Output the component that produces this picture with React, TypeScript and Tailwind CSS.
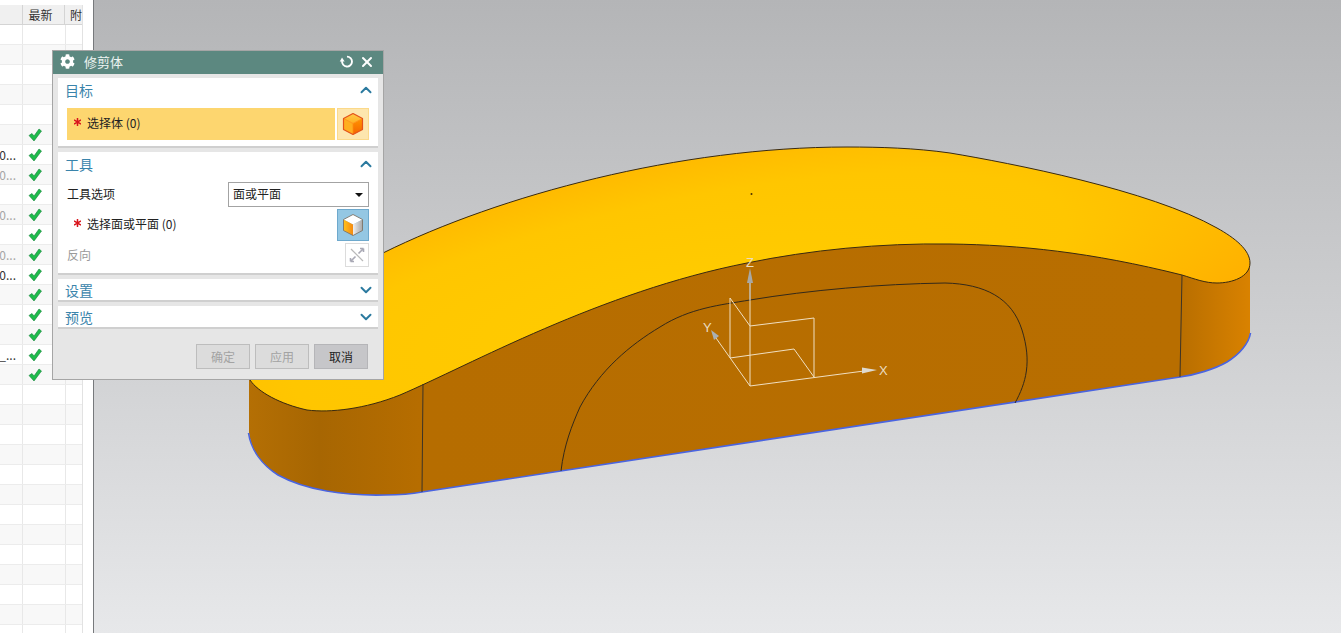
import { ChevronDown, ChevronUp, X } from "lucide-react"
import { FaCog } from "react-icons/fa"

const rows: { text?: string; muted?: boolean; checked?: boolean }[] = Array.from({ length: 31 }, (_, i) => ({
  checked: i >= 5 && i <= 17,
}))
rows[6].text = "0..."
rows[7].text = "0..."
rows[7].muted = true
rows[9].text = "0..."
rows[9].muted = true
rows[11].text = "0..."
rows[11].muted = true
rows[12].text = "0..."
rows[16].text = "_..."

function Check() {
  return (
    <svg width="14" height="14" viewBox="0 0 14 14">
      <path d="M1 7.500 L4 5.500 L6 8 L11 1 L13.500 3 L6 13 Z" fill="#1fbb4c" stroke="#14853a" strokeWidth="0.6" />
    </svg>
  )
}

function ResetIcon() {
  return (
    <svg width="15" height="15" viewBox="0 0 16 16" fill="none">
      <path d="M8.500 2.800 A5.300 5.300 0 1 1 3.300 7.500" stroke="#fff" strokeWidth="2" />
      <path d="M0.800 8 L6 8 L3.200 3.600 Z" fill="#fff" />
    </svg>
  )
}

function OrangeCube() {
  return (
    <svg width="22" height="24" viewBox="0 0 22 24">
      <defs>
        <linearGradient id="cubeTop" x1="0" y1="0" x2="0" y2="1">
          <stop offset="0" stopColor="#ffc94a" />
          <stop offset="1" stopColor="#ffb020" />
        </linearGradient>
        <linearGradient id="cubeRight" x1="0" y1="0" x2="0" y2="1">
          <stop offset="0" stopColor="#ff9500" />
          <stop offset="1" stopColor="#f56400" />
        </linearGradient>
      </defs>
      <path d="M11 1.500 L20.500 6.500 L11 11.500 L1.500 6.500 Z" fill="url(#cubeTop)" />
      <path d="M1.500 6.500 L11 11.500 L11 22.500 L1.500 17.500 Z" fill="#ffae1f" />
      <path d="M20.500 6.500 L11 11.500 L11 22.500 L20.500 17.500 Z" fill="url(#cubeRight)" />
      <path d="M1.500 6.500 L11 11.500 L20.500 6.500 M11 11.500 V22.500" fill="none" stroke="#ff8a10" strokeWidth="0.8" />
      <path d="M11 1.500 L20.500 6.500 V17.500 L11 22.500 L1.500 17.500 V6.500 Z" fill="none" stroke="#e4521a" strokeWidth="1.200" strokeLinejoin="round" />
    </svg>
  )
}

function ToolCube() {
  return (
    <svg width="22" height="24" viewBox="0 0 22 24">
      <defs>
        <linearGradient id="toolLeft" x1="0" y1="0" x2="1" y2="0">
          <stop offset="0" stopColor="#ffc21c" />
          <stop offset="1" stopColor="#f58a10" />
        </linearGradient>
        <linearGradient id="toolRight" x1="0" y1="0" x2="1" y2="0">
          <stop offset="0" stopColor="#eeeeee" />
          <stop offset="1" stopColor="#a8a8a8" />
        </linearGradient>
      </defs>
      <path d="M11 1.500 L20.500 6.500 L11 11.500 L1.500 6.500 Z" fill="#ffffff" />
      <path d="M1.500 6.500 L11 11.500 L11 22.500 L1.500 17.500 Z" fill="url(#toolLeft)" />
      <path d="M20.500 6.500 L11 11.500 L11 22.500 L20.500 17.500 Z" fill="url(#toolRight)" />
      <path d="M11 1.500 L20.500 6.500 V17.500 L11 22.500 L1.500 17.500 V6.500 Z" fill="none" stroke="#7d7468" strokeWidth="0.9" strokeLinejoin="round" />
    </svg>
  )
}

function FlipIcon() {
  return (
    <svg width="18" height="18" viewBox="0 0 18 18" fill="none">
      <path d="M3 3 L15 15" stroke="#b9b9b9" strokeWidth="1.2" />
      <path d="M10.500 7.500 L15.500 2.500 M15.500 2.500 H12 M15.500 2.500 V6" stroke="#a9a9b5" strokeWidth="1.6" />
      <path d="M7.500 10.500 L2.500 15.500 M2.500 15.500 H6 M2.500 15.500 V12" stroke="#a9a9b5" strokeWidth="1.6" />
    </svg>
  )
}

function SectionHead({ title, open }: { title: string; open?: boolean }) {
  return (
    <div className={`flex items-center justify-between pl-[7px] pr-[3px] ${open ? "h-[26px] pb-[2px]" : "h-[21px]"}`}>
      <span className="text-[14px] leading-none text-[#3a84ab]">{title}</span>
      {open ? (
        <ChevronUp size={18} strokeWidth={2.6} className="text-[#2b7a9f]" />
      ) : (
        <ChevronDown size={18} strokeWidth={2.6} className="text-[#2b7a9f]" />
      )}
    </div>
  )
}

function Required() {
  return (
    <svg width="7" height="8" viewBox="0 0 7 8" className="mb-[3px] mr-[6px] shrink-0">
      <path d="M3.500 0 V8 M0 2 L7 6 M7 2 L0 6" stroke="#d8141c" strokeWidth="1.5" />
    </svg>
  )
}

function FootButton({ label, active }: { label: string; active?: boolean }) {
  return (
    <div
      className={`flex h-[25px] w-[54px] items-center justify-center border text-xs ${
        active ? "border-[#b5b5b8] bg-[#c6c6c9] text-[#222]" : "border-[#bdbdbd] bg-[#dcdcdc] text-[#a3a3a3]"
      }`}
    >
      {label}
    </div>
  )
}

function TrimDialog() {
  return (
    <div className="absolute left-[52px] top-[50px] h-[330px] w-[332px] border border-[#a5a5a5] bg-[#e6e6e6] text-xs text-[#222]">
      <div className="flex h-[23px] items-center bg-[#5c8880] pb-[2px] pl-[7px] pr-2 text-white">
        <FaCog size={15} />
        <span className="ml-[9px] text-[13px] leading-none text-[#eef4f2]">修剪体</span>
        <span className="ml-auto">
          <ResetIcon />
        </span>
        <X size={16} strokeWidth={3} className="ml-[5px]" />
      </div>
      <div className="flex flex-col gap-1 px-[5px] pt-1">
        <div className="h-[70px] border-b-2 border-[#cfcfcf] bg-white">
          <SectionHead title="目标" open />
          <div className="mx-[9px] mt-1 flex h-8 gap-[2px]">
            <div className="flex flex-1 items-center bg-[#fdd66f] pb-[2px] pl-[7px]">
              <Required />
              <span>选择体 (0)</span>
            </div>
            <div className="flex w-8 items-center justify-center border border-[#fbd98a] bg-[#fde6ae]">
              <OrangeCube />
            </div>
          </div>
        </div>
        <div className="h-[123px] border-b-2 border-[#cfcfcf] bg-white">
          <SectionHead title="工具" open />
          <div className="mx-[9px] mt-1 flex h-[25px] items-center justify-between">
            <span className="pb-[2px]">工具选项</span>
            <div className="flex h-[25px] w-[141px] items-center justify-between border border-[#a3a3a3] pb-[2px] pl-1 pr-[5px]">
              <span>面或平面</span>
              <span className="mt-[2px] h-0 w-0 border-x-4 border-t-4 border-x-transparent border-t-[#111]" />
            </div>
          </div>
          <div className="mx-[9px] mt-[2px] flex h-8 items-center justify-between">
            <div className="flex items-center pb-[2px] pl-[7px]">
              <Required />
              <span>选择面或平面 (0)</span>
            </div>
            <div className="flex h-8 w-8 items-center justify-center border border-[#6ea9cd] bg-[#94c7e3]">
              <ToolCube />
            </div>
          </div>
          <div className="mx-[9px] mt-[2px] flex h-6 items-center justify-between text-[#9a9a9a]">
            <span>反向</span>
            <div className="flex h-6 w-6 items-center justify-center border border-[#dcdcdc]">
              <FlipIcon />
            </div>
          </div>
        </div>
        <div className="border-b-2 border-[#cfcfcf] bg-white">
          <SectionHead title="设置" />
        </div>
        <div className="border-b-2 border-[#cfcfcf] bg-white">
          <SectionHead title="预览" />
        </div>
      </div>
      <div className="mt-[15px] flex justify-end gap-[5px] pr-[15px]">
        <FootButton label="确定" />
        <FootButton label="应用" />
        <FootButton label="取消" active />
      </div>
    </div>
  )
}

function PartTable() {
  return (
    <div className="h-full w-[94px] shrink-0 overflow-hidden border-r border-[#77797c] bg-white pt-[5px] text-xs">
      <div className="w-[83px] border-r border-[#e2e2e2]">
        <div className="flex h-5 border-b border-[#d4d4d4] bg-[#f0f0f0] text-[#333]">
          <div className="w-[23px] border-r border-[#d4d4d4]" />
          <div className="flex w-[43px] items-center justify-start border-r border-[#d4d4d4] pl-[6px]">最新</div>
          <div className="flex flex-1 items-center pl-[5px]">附</div>
        </div>
        {rows.map((row, i) => (
          <div key={i} className={`flex h-5 border-b border-[#ececec] ${i % 2 === 1 ? "bg-[#f8f8f8]" : "bg-white"}`}>
            <div
              className={`flex w-[23px] items-center justify-end border-r border-[#e8e8e8] pr-[6px] ${
                row.muted ? "text-[#a5a5a5]" : "text-[#333]"
              }`}
            >
              {row.text}
            </div>
            <div className="flex w-[43px] items-center justify-start border-r border-[#e8e8e8] pl-[5px]">
              {row.checked && <Check />}
            </div>
            <div className="flex-1" />
          </div>
        ))}
      </div>
    </div>
  )
}

function Model() {
  const top =
    "M250 380 C258 392 280 404 307 410 C330 413 365 409 400 395 C470 365 600 292 747 263 C810 250 880 243 950 244 C1020 245 1090 252 1182 275 C1195 279 1205 283 1217 283 C1232 283 1250 277 1250 263 C1250 250 1235 238 1217 228 C1150 190 1010 163 950 153 C915 148 880 147 847 147 C680 147 500 195 383 253 C330 280 270 320 250 380 Z"
  const wall =
    "M249 375 V433 C251 450 262 465 278 475 C305 490 345 496 385 495 C400 495 412 494 422 492 L1180 377 C1195 375 1215 369 1227 362 C1240 354 1249 343 1250 333 V263 L1200 250 L900 200 L600 270 L300 370 Z"
  return (
    <svg viewBox="94 0 1247 633" className="h-full w-full">
      <defs>
        <linearGradient id="wallFill" gradientUnits="userSpaceOnUse" x1="249" y1="0" x2="1250" y2="0">
          <stop offset="0" stopColor="#b46f04" />
          <stop offset="0.07" stopColor="#a76602" />
          <stop offset="0.17" stopColor="#b66d00" />
          <stop offset="0.93" stopColor="#b86e00" />
          <stop offset="1" stopColor="#d98200" />
        </linearGradient>
        <radialGradient id="topFill" gradientUnits="userSpaceOnUse" cx="0" cy="0" r="720" gradientTransform="translate(680 300) rotate(-12) scale(1 0.25)">
          <stop offset="0" stopColor="#ffcc00" />
          <stop offset="0.55" stopColor="#ffc600" />
          <stop offset="1" stopColor="#ffad00" />
        </radialGradient>
      </defs>
      <path d={wall} fill="url(#wallFill)" />
      <path
        d="M248.500 433 C251 450 262 465 278 475 C305 490 345 496 385 495 C400 495 412 494 422 492 L1180 377 C1195 375 1215 369 1227 362 C1240 354 1249 343 1250.500 333"
        fill="none"
        stroke="#4a64e0"
        strokeWidth="1.6"
      />
      <path d={top} fill="url(#topFill)" stroke="#3a2a10" strokeWidth="1" />
      <path d="M423 384 L422 492 M1182 275 L1180 377" stroke="#3c3326" strokeWidth="1" fill="none" />
      <path
        d="M561 471 C564 445 572 425 580 407 C600 370 630 345 660 327 C690 308 720 305 750 300 C810 290 880 284 945 283 C985 284 1012 298 1022 330 C1032 362 1026 383 1015 403"
        fill="none"
        stroke="#33291a"
        strokeWidth="1"
      />
      <circle cx="751.500" cy="194" r="1" fill="#4a3000" />

      {/* csys */}
      <g fill="none" stroke="#f0dfc0" strokeWidth="1">
        <path d="M750 386 V300 M750 386 L716 338 M750 386 L864 371" />
        <path d="M730 358 V298 L750 326 L814 318 V377 M730 358 L794 349 L814 377" />
      </g>
      <path d="M750 268 L753 283 H747 Z" fill="#a8a8a4" />
      <path d="M750 283 V300" stroke="#c4c2b8" strokeWidth="1.500" />
      <path d="M711 330 L719 336 L714 340 Z" fill="#a9b0b4" />
      <path d="M877 370 L862 367.500 L862 373.500 Z" fill="#dedad0" />
      <g fill="#eadcc0" fontFamily="Liberation Sans, sans-serif" fontSize="13">
        <text x="746" y="267">Z</text>
        <text x="703" y="332">Y</text>
        <text x="879" y="375">X</text>
      </g>
    </svg>
  )
}

export default function App() {
  return (
    <div
      className="relative flex h-[633px] w-[1341px] overflow-hidden"
      style={{ fontFamily: '"Noto Sans CJK SC", "Liberation Sans", sans-serif' }}
    >
      <PartTable />
      <div className="h-full flex-1 bg-gradient-to-b from-[#b4b5b7] to-[#e7e8ea]">
        <Model />
      </div>
      <TrimDialog />
    </div>
  )
}
